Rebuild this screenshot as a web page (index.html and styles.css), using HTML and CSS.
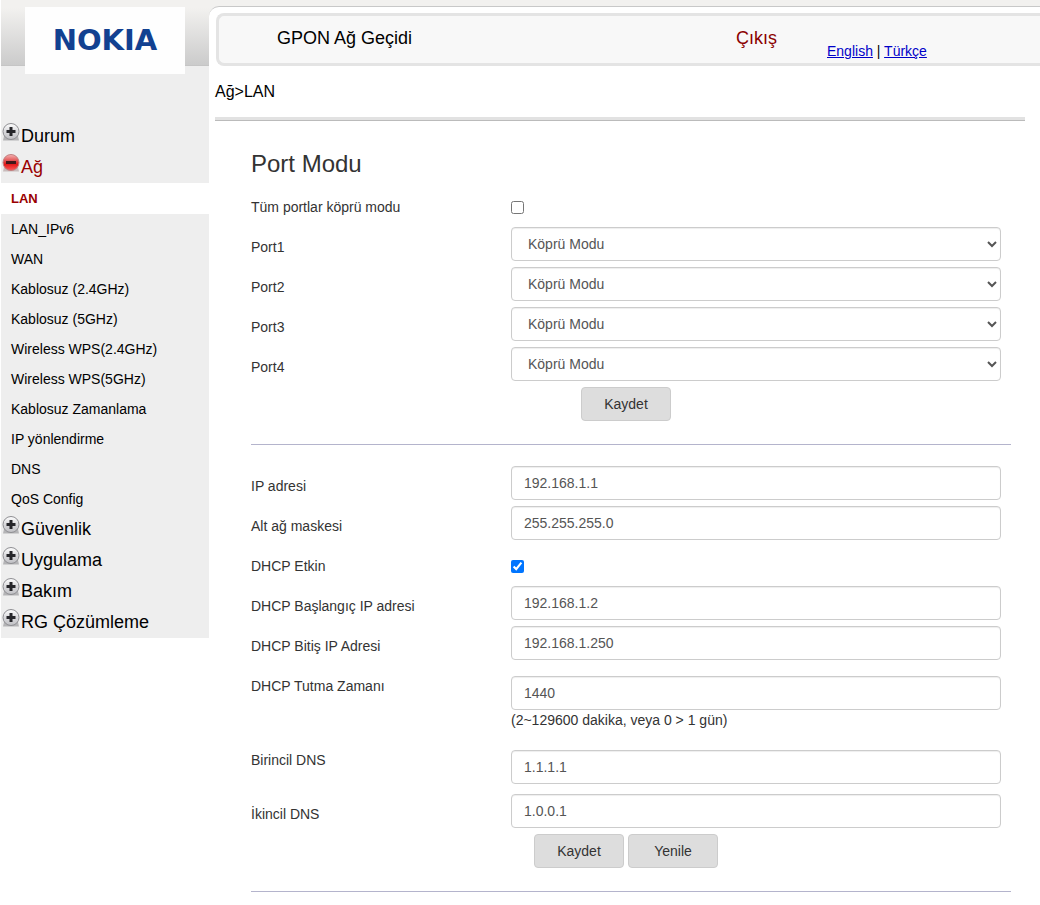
FILE: index.html
```
<!DOCTYPE html>
<html lang="tr">
<head>
    <meta charset="UTF-8">
    <meta name="viewport" content="width=device-width, initial-scale=1.0">
    <title>GPON Ağ Geçidi</title>
    <link rel="stylesheet" href="styles.css">
</head>
<body>
    <!-- shared menu icons -->
    <svg class="defs" width="0" height="0" aria-hidden="true">
        <defs>
            <linearGradient id="grey" x1="0" y1="0" x2="0" y2="1">
                <stop offset="0" stop-color="#ffffff"/>
                <stop offset="0.5" stop-color="#d9d9dc"/>
                <stop offset="1" stop-color="#c0c0c4"/>
            </linearGradient>
            <linearGradient id="red" x1="0" y1="0" x2="0" y2="1">
                <stop offset="0" stop-color="#f6b4b4"/>
                <stop offset="0.4" stop-color="#e05050"/>
                <stop offset="0.6" stop-color="#e01818"/>
                <stop offset="1" stop-color="#ff5a5a"/>
            </linearGradient>
            <symbol id="plus" viewBox="0 0 18 18">
                <path d="M2 13h14l1 4.500H1z" fill="#b4b4b6"/>
                <circle cx="9" cy="8.5" r="8" fill="url(#grey)" stroke="#8e8e92"/>
                <path d="M7.500 4h3v3h3v3h-3v3h-3v-3h-3v-3h3z" fill="#26262a"/>
            </symbol>
            <symbol id="minus" viewBox="0 0 18 18">
                <path d="M2 13h14l1 4.500H1z" fill="#c8bcbc"/>
                <circle cx="9" cy="8.500" r="8" fill="url(#red)" stroke="#c08080"/>
                <path d="M4 7h10v3H4z" fill="#40181a"/>
            </symbol>
        </defs>
    </svg>

    <div class="page">
        <aside class="sidebar">
            <div class="logo">NOKIA</div>
            <nav class="menu">
                <a class="menu-head" href="#"><svg><use href="#plus"/></svg>Durum</a>
                <a class="menu-head open" href="#"><svg><use href="#minus"/></svg>Ağ</a>
                <ul>
                    <li><a class="active" href="#">LAN</a></li>
                    <li><a href="#">LAN_IPv6</a></li>
                    <li><a href="#">WAN</a></li>
                    <li><a href="#">Kablosuz (2.4GHz)</a></li>
                    <li><a href="#">Kablosuz (5GHz)</a></li>
                    <li><a href="#">Wireless WPS(2.4GHz)</a></li>
                    <li><a href="#">Wireless WPS(5GHz)</a></li>
                    <li><a href="#">Kablosuz Zamanlama</a></li>
                    <li><a href="#">IP yönlendirme</a></li>
                    <li><a href="#">DNS</a></li>
                    <li><a href="#">QoS Config</a></li>
                </ul>
                <a class="menu-head" href="#"><svg><use href="#plus"/></svg>Güvenlik</a>
                <a class="menu-head" href="#"><svg><use href="#plus"/></svg>Uygulama</a>
                <a class="menu-head" href="#"><svg><use href="#plus"/></svg>Bakım</a>
                <a class="menu-head" href="#"><svg><use href="#plus"/></svg>RG Çözümleme</a>
            </nav>
        </aside>

        <div class="content">
            <header class="topbar">
                <span class="device">GPON Ağ Geçidi</span>
                <a class="logout" href="#">Çıkış</a>
                <span class="langs"><a href="#">English</a> | <a href="#">Türkçe</a></span>
            </header>

            <div class="breadcrumb">Ağ&gt;LAN</div>

            <main>
                <form>
                    <h1>Port Modu</h1>
                    <div class="row">
                        <label for="bridgeAll">Tüm portlar köprü modu</label>
                        <input type="checkbox" id="bridgeAll">
                    </div>
                    <div class="row">
                        <label for="port1">Port1</label>
                        <select id="port1"><option>Köprü Modu</option><option>Yönlendirme Modu</option></select>
                    </div>
                    <div class="row">
                        <label for="port2">Port2</label>
                        <select id="port2"><option>Köprü Modu</option><option>Yönlendirme Modu</option></select>
                    </div>
                    <div class="row">
                        <label for="port3">Port3</label>
                        <select id="port3"><option>Köprü Modu</option><option>Yönlendirme Modu</option></select>
                    </div>
                    <div class="row">
                        <label for="port4">Port4</label>
                        <select id="port4"><option>Köprü Modu</option><option>Yönlendirme Modu</option></select>
                    </div>
                    <div class="buttons">
                        <button type="button">Kaydet</button>
                    </div>
                </form>

                <form class="lan">
                    <div class="row">
                        <label for="ip">IP adresi</label>
                        <input type="text" id="ip" value="192.168.1.1">
                    </div>
                    <div class="row">
                        <label for="mask">Alt ağ maskesi</label>
                        <input type="text" id="mask" value="255.255.255.0">
                    </div>
                    <div class="row">
                        <label for="dhcp">DHCP Etkin</label>
                        <input type="checkbox" id="dhcp" checked>
                    </div>
                    <div class="row">
                        <label for="dhcpStart">DHCP Başlangıç IP adresi</label>
                        <input type="text" id="dhcpStart" value="192.168.1.2">
                    </div>
                    <div class="row">
                        <label for="dhcpEnd">DHCP Bitiş IP Adresi</label>
                        <input type="text" id="dhcpEnd" value="192.168.1.250">
                    </div>
                    <div class="row spaced lease">
                        <label for="lease">DHCP Tutma Zamanı</label>
                        <div class="field">
                            <input type="text" id="lease" value="1440">
                            <small>(2~129600 dakika, veya 0 &gt; 1 gün)</small>
                        </div>
                    </div>
                    <div class="row spaced">
                        <label for="dns1">Birincil DNS</label>
                        <div class="field">
                            <input type="text" id="dns1" value="1.1.1.1">
                        </div>
                    </div>
                    <div class="row">
                        <label for="dns2">İkincil DNS</label>
                        <input type="text" id="dns2" value="1.0.0.1">
                    </div>
                    <div class="buttons">
                        <button type="button">Kaydet</button>
                        <button type="button">Yenile</button>
                    </div>
                </form>
            </main>
        </div>
    </div>
</body>
</html>
```
FILE: styles.css
```
* { margin: 0; padding: 0; box-sizing: border-box; }
body {
    font-family: "Liberation Sans", Arial, sans-serif;
    font-size: 14px;
    line-height: 20px;
    color: #333;
    background: #fff;
}
a {
    color: #000;
    text-decoration: none;
}
.defs {
    display: block;
}
.page {
    display: flex;
    align-items: flex-start;
    margin-left: 1px;
    background: linear-gradient(#f2f1ef 8px, #cbcbcb 65px, #bfbfbf 66px, transparent 66px);
}

/* sidebar */
.sidebar {
    flex: 0 0 208px;
    padding-top: 7px;
    background: linear-gradient(transparent 66px, #eee 66px);
}
.logo {
    width: 160px;
    margin: 0 24px 47px;
    background: #fefefe;
    color: #124191;
    font: bold 29px/67px "DejaVu Sans", Verdana, sans-serif;
    text-align: center;
}
.menu-head {
    display: flex;
    height: 31px;
    padding-left: 1px;
    font-size: 18px;
    line-height: 31px;
}
.menu-head svg {
    width: 18px;
    height: 18px;
    margin: 2px 1px 0 0;
}
.menu-head.open {
    color: #900;
}
.menu ul {
    list-style: none;
}
.menu li a {
    display: block;
    padding-left: 10px;
    line-height: 30px;
}
.menu li .active {
    background: #fff;
    color: #900;
    font-size: 13px;
    font-weight: bold;
    line-height: 31px;
}

/* content */
.content {
    flex: 1;
    min-width: 0;
    margin-top: 6px;
    padding: 6px 0 13px 6px;
    background: #fff;
    border-top: 1px solid #c8c8c8;
    border-top-left-radius: 10px;
}
.topbar {
    display: grid;
    grid-template-columns: 459px 91px 1fr;
    height: 53px;
    margin-left: 1px;
    padding-left: 58px;
    background: #f8f8f8;
    border: 3px solid #e4e4e4;
    border-right: 0;
    border-radius: 8px 0 0 8px;
    color: #000;
    line-height: 44px;
}
.device,
.logout {
    font-size: 18px;
}
.logout {
    color: #8b0000;
}
.langs {
    padding-top: 13px;
}
.langs a {
    color: #0000c8;
    text-decoration: underline;
}
.breadcrumb {
    height: 55px;
    margin-right: 15px;
    border-bottom: 1px solid #bbb;
    box-shadow: inset 0 -3px #e2e2e2;
    color: #000;
    font-size: 16px;
    line-height: 52px;
}

/* forms */
main {
    margin: 19px 29px 0 36px;
}
form {
    padding-right: 10px;
    padding-bottom: 23px;
    border-bottom: 1px solid #b4b4cc;
}
h1 {
    font-size: 24px;
    font-weight: normal;
    line-height: 47px;
}
.lan {
    padding-top: 21px;
}
.row {
    display: grid;
    grid-template-columns: 260px 1fr;
    align-items: start;
    min-height: 40px;
}
.row label {
    line-height: 40px;
}
.row.spaced {
    min-height: 54px;
}
.row.lease {
    min-height: 74px;
}
.spaced .field {
    padding-top: 10px;
}
.field small {
    display: block;
    font-size: 14px;
}
input[type="text"],
select {
    display: block;
    width: 100%;
    height: 34px;
    padding: 6px 12px;
    border: 1px solid #ccc;
    border-radius: 4px;
    background: #fff;
    box-shadow: inset 0 1px 1px rgba(0,0,0,0.07);
    color: #555;
    font: inherit;
}
input[type="checkbox"] {
    width: 13px;
    height: 13px;
    margin-top: 14px;
}
.buttons {
    display: flex;
    justify-content: center;
    gap: 4px;
}
button {
    width: 90px;
    height: 34px;
    background: #ddd;
    border: 1px solid #ccc;
    border-radius: 4px;
    color: #333;
    font: inherit;
    cursor: pointer;
}
```
